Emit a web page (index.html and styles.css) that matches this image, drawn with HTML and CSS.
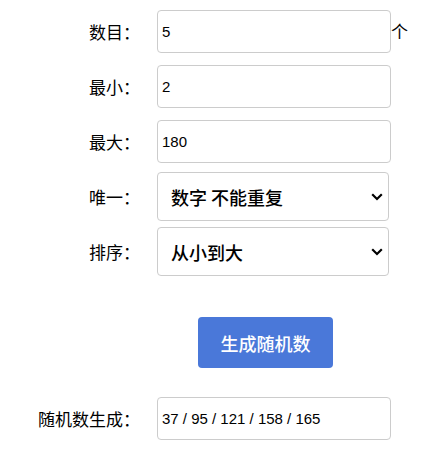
FILE: index.html
```html
<!DOCTYPE html>
<html lang="zh-CN">
<head>
<meta charset="utf-8">
<title>随机数生成</title>
<link rel="stylesheet" href="styles.css">
</head>
<body>
<form class="form">
  <div class="row">
    <label class="lbl">数目：</label>
    <input class="field" type="text" value="5">
    <span class="unit">个</span>
  </div>
  <div class="row">
    <label class="lbl">最小：</label>
    <input class="field" type="text" value="2">
  </div>
  <div class="row">
    <label class="lbl">最大：</label>
    <input class="field" type="text" value="180">
  </div>
  <div class="row row-sel first-sel">
    <label class="lbl">唯一：</label>
    <select class="sel"><option>数字 不能重复</option></select>
  </div>
  <div class="row row-sel">
    <label class="lbl">排序：</label>
    <select class="sel"><option>从小到大</option></select>
  </div>
  <div class="actions">
    <button class="btn" type="button">生成随机数</button>
  </div>
  <div class="row row-result">
    <label class="lbl">随机数生成：</label>
    <input class="field" type="text" value="37 / 95 / 121 / 158 / 165">
  </div>
</form>
</body>
</html>
```
FILE: styles.css
```css
* { box-sizing: border-box; }
body {
  margin: 8px;
  background: #fff;
  color: #000;
  font-family: "Noto Sans CJK SC", "Liberation Sans", sans-serif;
}
.form {
  padding-top: 2px;
  display: flex;
  flex-direction: column;
}
.row {
  display: flex;
  align-items: center;
  height: 43px;
  margin-bottom: 12px;
}
.lbl {
  width: 132px;
  margin-right: 17px;
  text-align: right;
  white-space: nowrap;
  font-size: 17px;
  line-height: 22px;
}
.field {
  width: 234px;
  height: 43px;
  border: 1px solid #cccccc;
  border-radius: 4px;
  padding: 0 4px;
  font-family: "Liberation Sans", Arial, sans-serif;
  font-size: 15px;
  color: #000;
  background: #fff;
  outline: none;
}
.unit {
  font-size: 17px;
  line-height: 22px;
  margin-top: -2px;
}
.row-sel {
  height: 49px;
  margin-bottom: 6px;
}
.first-sel { margin-top: -3px; }
.sel {
  appearance: none;
  -webkit-appearance: none;
  width: 232px;
  height: 49px;
  border: 1px solid #cccccc;
  border-radius: 4px;
  padding: 0 30px 0 13px;
  font-family: "Noto Sans CJK SC", sans-serif;
  font-size: 18px;
  font-weight: 500;
  color: #000;
  background-color: #fff;
  background-image: url("data:image/svg+xml,%3Csvg xmlns='http://www.w3.org/2000/svg' width='12' height='8' viewBox='0 0 12 8'%3E%3Cpath d='M1.2 1.3 L6 6 L10.8 1.3' fill='none' stroke='%23000' stroke-width='2.2'/%3E%3C/svg%3E");
  background-repeat: no-repeat;
  background-position: right 5px center;
  background-size: 12px 8px;
  outline: none;
}
.actions {
  padding-left: 190px;
  margin-top: 35px;
}
.btn {
  width: 135px;
  height: 51px;
  border: none;
  border-radius: 4px;
  background: #4a78d9;
  color: #fff;
  font-family: "Noto Sans CJK SC", sans-serif;
  font-size: 18px;
  font-weight: 500;
  cursor: pointer;
}
.row-result {
  margin-top: 29px;
}
```
